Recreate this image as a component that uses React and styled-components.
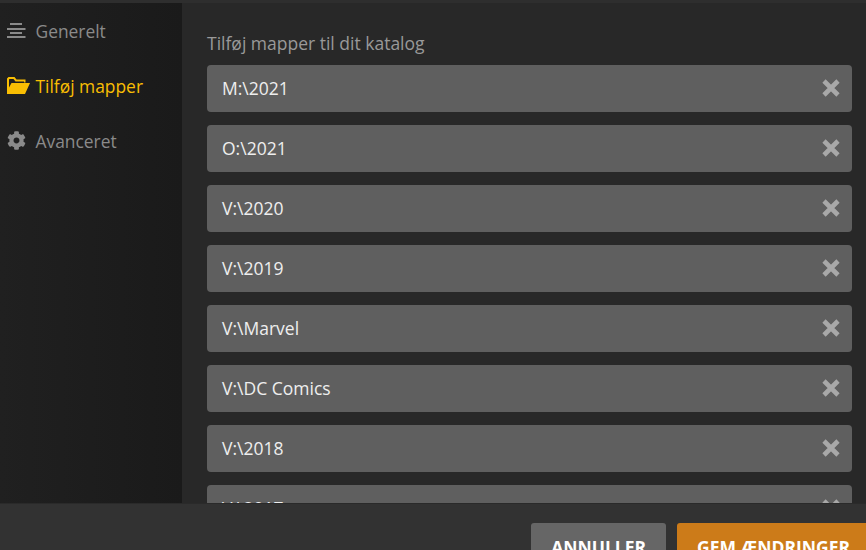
import React from "react";
import styled, { createGlobalStyle } from "styled-components";
import { FaCog } from "react-icons/fa";

const GlobalStyle = createGlobalStyle`
	html, body {
		margin: 0;
		padding: 0;
		height: 100%;
		overflow: hidden;
		background: #282828;
		font-family: "Open Sans", "Liberation Sans", sans-serif;
	}
	#root {
		height: 100%;
	}
`;

const Page = styled.div`
	display: flex;
	flex-direction: column;
	width: 866px;
	height: 570px;
`;

const Body = styled.div`
	display: flex;
	flex: 1;
	min-height: 0;
	border-top: 3px solid #2e2e2e;
`;

const Sidebar = styled.nav`
	display: flex;
	flex-direction: column;
	flex: 0 0 182px;
	background: linear-gradient(90deg, #202020, #1a1a1a);
`;

const NavItem = styled.div`
	display: flex;
	align-items: center;
	height: 55px;
	padding-left: 7px;
	font-size: 17.4px;
	color: ${(props) => (props.$active ? "#f9be03" : "#8a8a8a")};
`;

const NavIcon = styled.span`
	display: flex;
	flex: 0 0 28.5px;
	align-items: center;
	font-size: 19px;
`;

const Main = styled.main`
	flex: 1;
	min-width: 0;
	padding: 28px 14px 0 25px;
	overflow: hidden;
`;

const Label = styled.div`
	height: 34px;
	font-size: 17.5px;
	line-height: 25px;
	color: #999;
`;

const FolderList = styled.div`
	display: flex;
	flex-direction: column;
	gap: 13px;
`;

const FolderRow = styled.div`
	display: flex;
	flex: 0 0 47px;
	align-items: center;
	justify-content: space-between;
	box-sizing: border-box;
	padding: 0 12px 2px 15px;
	border-radius: 4px;
	background: #5f5f5f;
	font-size: 17.5px;
	color: #eee;
`;

const Footer = styled.footer`
	display: flex;
	flex: 0 0 67px;
	justify-content: flex-end;
	gap: 11px;
	box-sizing: border-box;
	padding-top: 19px;
	margin-right: -4px;
	background: #323232;
	border-top: 1px solid #2a2a2a;
`;

const Button = styled.button`
	height: 47px;
	padding: 0 20px;
	border: 0;
	border-radius: 3px;
	background: ${(props) => (props.$primary ? "#cc7b19" : "#666")};
	font-family: inherit;
	font-size: 17.5px;
	font-weight: 700;
	color: #fff;
	text-transform: uppercase;
`;

const MenuIcon = () => (
	<svg width="19" height="18" viewBox="0 0 19 18" fill="currentColor">
		<rect x="3" y="1" width="12" height="2" />
		<rect x="0" y="6" width="18.500" height="2" />
		<rect x="3" y="10" width="12" height="2" />
		<rect x="0" y="14" width="18.500" height="2" />
	</svg>
);

const FolderIcon = () => (
	<svg width="23" height="17" viewBox="0 0 23 17" fill="currentColor">
		<path d="M0 17V1.500L1.500 0H7.500l2 2.500h9V5.500H17V4.500H8.500L6.500 2H2.500L2 2.500V10.500L4.500 6H23L18 17Z" />
	</svg>
);

const RemoveIcon = () => (
	<svg width="18" height="18" viewBox="0 0 18 18" stroke="#a8a8a8" strokeWidth="4.600">
		<path d="M2 2 16 16M16 2 2 16" />
	</svg>
);

const FOLDERS = [
	"M:\\2021",
	"O:\\2021",
	"V:\\2020",
	"V:\\2019",
	"V:\\Marvel",
	"V:\\DC Comics",
	"V:\\2018",
	"V:\\2017",
];

const App = () => {
	return (
		<>
			<GlobalStyle />
			<Page>
				<Body>
					<Sidebar>
						<NavItem>
							<NavIcon>
								<MenuIcon />
							</NavIcon>
							Generelt
						</NavItem>
						<NavItem $active>
							<NavIcon>
								<FolderIcon />
							</NavIcon>
							Tilføj mapper
						</NavItem>
						<NavItem>
							<NavIcon>
								<FaCog />
							</NavIcon>
							Avanceret
						</NavItem>
					</Sidebar>
					<Main>
						<Label>Tilføj mapper til dit katalog</Label>
						<FolderList>
							{FOLDERS.map((folder) => (
								<FolderRow key={folder}>
									{folder}
									<RemoveIcon />
								</FolderRow>
							))}
						</FolderList>
					</Main>
				</Body>
				<Footer>
					<Button>Annuller</Button>
					<Button $primary>Gem ændringer</Button>
				</Footer>
			</Page>
		</>
	);
};

export default App;
